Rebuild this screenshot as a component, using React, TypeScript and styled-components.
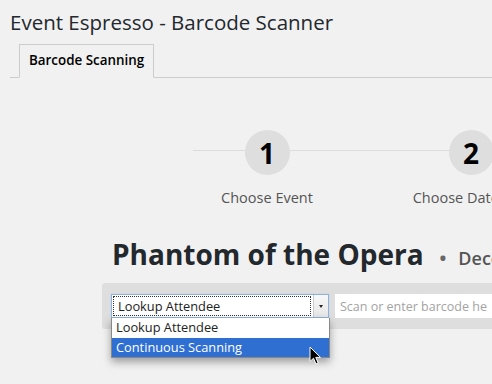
import styled, { createGlobalStyle } from "styled-components";

const GlobalStyle = createGlobalStyle`
    html, body {
        margin: 0;
        padding: 0;
        background: #f1f1f1;
        font-family: "Open Sans", "Noto Sans", sans-serif;
        color: #23282d;
        overflow: hidden;
    }
`;

const Page = styled.div`
    width: 492px;
    height: 384px;
    overflow: hidden;
    position: relative;
`;

const Title = styled.h1`
    margin: 0;
    padding: 9px 0 0 10px;
    font-size: 20.5px;
    line-height: 26px;
    font-weight: 400;
    color: #23282d;
    white-space: nowrap;
`;

const TabBar = styled.nav`
    display: flex;
    margin: 9px 0 0 10px;
    padding-left: 9px;
    border-bottom: 1px solid #ccc;
`;

const Tab = styled.div<{ $active?: boolean }>`
    padding: 6px 9px 7px 9px;
    margin-bottom: -1px;
    border: 1px solid #ccc;
    border-bottom: 1px solid ${(p) => (p.$active ? "#f1f1f1" : "#ccc")};
    background: #f1f1f1;
    font-size: 13.4px;
    line-height: 19px;
    font-weight: 600;
    color: #000;
    white-space: nowrap;
`;

const Steps = styled.ol`
    position: relative;
    display: flex;
    margin: 52px 0 0 165px;
    padding: 0;
    list-style: none;

    &::before {
        content: "";
        position: absolute;
        top: 20px;
        left: 28px;
        right: -400px;
        height: 1px;
        background: #dcdcdc;
    }
`;

const Step = styled.li`
    position: relative;
    flex: 0 0 204px;
    display: flex;
    flex-direction: column;
    align-items: center;
`;

const Circle = styled.span`
    width: 45px;
    height: 45px;
    border-radius: 50%;
    background: #dedede;
    display: flex;
    align-items: center;
    justify-content: center;
    font-size: 28px;
    font-weight: 700;
    color: #000;
    line-height: 1;
`;

const StepLabel = styled.span`
    margin-top: 13px;
    font-size: 14.5px;
    line-height: 20px;
    color: #555;
    white-space: nowrap;
`;

const EventHeading = styled.h2`
    display: flex;
    align-items: baseline;
    margin: 28px 0 0 112px;
    font-size: 28px;
    line-height: 36px;
    font-weight: 700;
    color: #23282d;
    white-space: nowrap;
`;

const Bullet = styled.span`
    margin: 0 12px 0 16px;
    font-size: 18px;
    color: #666;
`;

const EventDate = styled.span`
    font-size: 18px;
    font-weight: 600;
    color: #555;
`;

const ScanBar = styled.div`
    display: flex;
    align-items: center;
    gap: 6px;
    margin: 7px 0 0 102px;
    padding: 11px 0 11px 9px;
    background: #dedede;
    border-radius: 3px 0 0 3px;
`;

const SelectWrap = styled.div`
    position: relative;
    flex: 0 0 auto;
`;

const Select = styled.div`
    display: flex;
    width: 218px;
    height: 24px;
    box-sizing: border-box;
    border: 1px solid #8fb2dc;
    background: #fff;
    box-shadow: 0 0 1px #a9c6ea;
`;

const SelectValue = styled.div`
    flex: 1;
    margin: 1px 2px 1px 1px;
    padding-left: 5px;
    outline: 1px dotted #333;
    outline-offset: -1px;
    font-size: 12.8px;
    line-height: 20px;
    color: #222;
`;

const SelectArrow = styled.div`
    width: 14px;
    display: flex;
    align-items: center;
    justify-content: center;
    background: linear-gradient(#f8f8f8, #e6e6e6);
    border-left: 1px solid #ccc;

    &::after {
        content: "";
        border-left: 2.5px solid transparent;
        border-right: 2.5px solid transparent;
        border-top: 3px solid #222;
    }
`;

const Options = styled.ul`
    position: absolute;
    top: 24px;
    left: 0;
    width: 219px;
    margin: 0;
    padding: 0;
    list-style: none;
    background: #fff;
    border: 1px solid #888;
    border-top: none;
    box-sizing: border-box;
    box-shadow: 0 4px 8px rgba(0, 0, 0, 0.35);
    z-index: 2;
`;

const Option = styled.li<{ $selected?: boolean }>`
    height: 19.5px;
    padding-left: 4px;
    font-size: 12.8px;
    line-height: 19px;
    color: ${(p) => (p.$selected ? "#fff" : "#222")};
    background: ${(p) => (p.$selected ? "#2f6fd2" : "#fff")};
    white-space: nowrap;
`;

const BarcodeInput = styled.input`
    flex: 1;
    min-width: 0;
    height: 24px;
    box-sizing: border-box;
    border: none;
    padding: 0 5px;
    font-family: "Open Sans", "Noto Sans", sans-serif;
    font-size: 12.5px;
    background: #fff;
    color: #222;

    &::placeholder {
        color: #a3a3a3;
    }
`;

const Pointer = styled.svg`
    position: absolute;
    left: 309px;
    top: 346px;
    z-index: 3;
`;

const App = () => {
    return (
        <Page>
            <GlobalStyle />
            <Title>Event Espresso - Barcode Scanner</Title>
            <TabBar>
                <Tab $active>Barcode Scanning</Tab>
            </TabBar>
            <Steps>
                <Step>
                    <Circle>1</Circle>
                    <StepLabel>Choose Event</StepLabel>
                </Step>
                <Step>
                    <Circle>2</Circle>
                    <StepLabel>Choose Datetime</StepLabel>
                </Step>
            </Steps>
            <EventHeading>
                Phantom of the Opera
                <Bullet>•</Bullet>
                <EventDate>December 31</EventDate>
            </EventHeading>
            <ScanBar>
                <SelectWrap>
                    <Select>
                        <SelectValue>Lookup Attendee</SelectValue>
                        <SelectArrow />
                    </Select>
                    <Options>
                        <Option>Lookup Attendee</Option>
                        <Option $selected>Continuous Scanning</Option>
                    </Options>
                </SelectWrap>
                <BarcodeInput placeholder="Scan or enter barcode here" />
            </ScanBar>
            <Pointer width="13" height="20" viewBox="0 0 13 20">
                <path
                    d="M1 1 L1 15.5 L4.5 12.2 L7 18 L9.2 17 L6.8 11.4 L11.5 11.4 Z"
                    fill="#000"
                    stroke="#fff"
                    strokeWidth="1"
                    strokeLinejoin="round"
                />
            </Pointer>
        </Page>
    );
};

export default App;
